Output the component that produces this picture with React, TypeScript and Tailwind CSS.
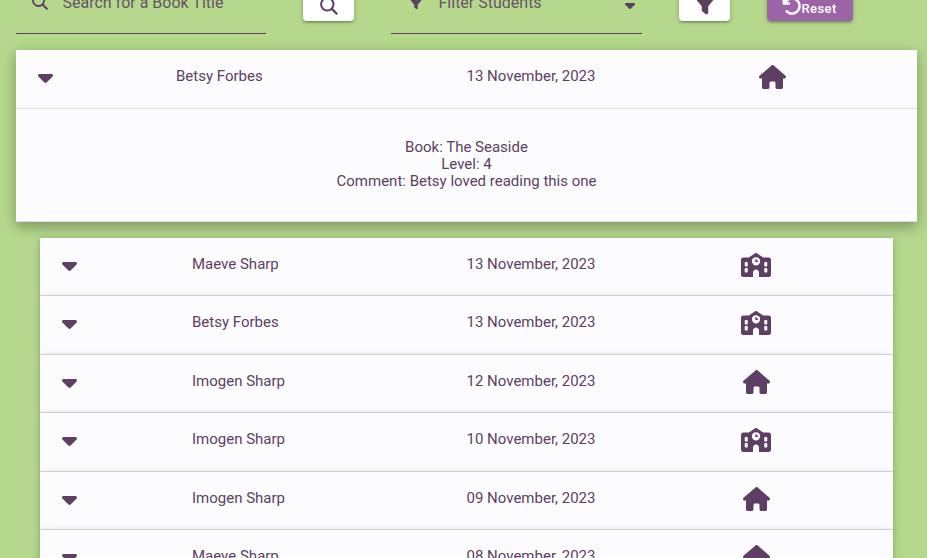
import { FaArrowRotateLeft, FaCaretDown, FaFilter, FaHouse, FaSchool } from "react-icons/fa6";

type Entry = { name: string; date: string; place: "home" | "school" };

const openEntry: Entry = { name: "Betsy Forbes", date: "13 November, 2023", place: "home" };

const entries: Entry[] = [
  { name: "Maeve Sharp", date: "13 November, 2023", place: "school" },
  { name: "Betsy Forbes", date: "13 November, 2023", place: "school" },
  { name: "Imogen Sharp", date: "12 November, 2023", place: "home" },
  { name: "Imogen Sharp", date: "10 November, 2023", place: "school" },
  { name: "Imogen Sharp", date: "09 November, 2023", place: "home" },
  { name: "Maeve Sharp", date: "08 November, 2023", place: "home" },
];

function SearchIcon({ className }: { className: string }) {
  return (
    <svg viewBox="0 0 18 18" className={className} fill="none" stroke="currentColor" strokeWidth="2">
      <circle cx="7.3" cy="7.3" r="6.2" />
      <path d="M11.6 11.6 17.3 17.3" strokeWidth="2.2" />
    </svg>
  );
}

function Header({ entry, open }: { entry: Entry; open?: boolean }) {
  return (
    <div className={`flex border-b border-[#ddd] pt-[15px] pl-[22px] ${open ? "h-[59px]" : "h-[58.4px]"}`}>
      <FaCaretDown className="h-6 w-[15px] shrink-0" />
      <span className={`shrink-0 pt-[2px] leading-[18px] ${open ? "ml-[123px] w-[290.5px]" : "ml-[115px] w-[274.5px]"}`}>
        {entry.name}
      </span>
      <span className="w-[130px] shrink-0 pt-[2px] leading-[18px]">{entry.date}</span>
      <span className={`flex w-[30px] shrink-0 ${open ? "ml-[160.5px]" : "ml-[144.5px]"}`}>
        {entry.place === "home" ? <FaHouse className="ml-[1.5px] h-6 w-[27px]" /> : <FaSchool className="h-6 w-[30px]" />}
      </span>
    </div>
  );
}

export default function App() {
  return (
    <div className="h-[558px] w-[927px] overflow-hidden bg-[#b5d88c] font-[Roboto,sans-serif] text-[15px] text-[#5d3f64]">
      <div className="flex h-[50px] items-start px-4">
        <div className="flex h-[34px] w-[250px] border-b border-[#5d3f64]">
          <SearchIcon className="-mt-[6px] ml-[15.5px] size-4 shrink-0" />
          <span className="-mt-[7px] ml-[15px] text-[16px] leading-5 text-[#5d3f64]/90">Search for a Book Title</span>
        </div>
        <div className="-mt-[15px] ml-[37px] flex h-9 w-[51px] justify-center rounded-[4px] bg-white shadow-[0_2px_2px_0_rgba(0,0,0,0.14),0_3px_1px_-2px_rgba(0,0,0,0.12),0_1px_5px_0_rgba(0,0,0,0.2)]">
          <SearchIcon className="mt-[12px] size-[18px]" />
        </div>
        <div className="ml-[37px] flex h-[34px] w-[251px] border-b border-[#5d3f64]">
          <FaFilter className="-mt-[4px] ml-[17.5px] size-[14px] shrink-0" />
          <span className="-mt-[7px] ml-4 text-[16px] leading-5 text-[#5d3f64]/90">Filter Students</span>
          <FaCaretDown className="-mt-[3px] mr-[7px] ml-auto h-4 w-[10px]" />
        </div>
        <div className="-mt-[15px] ml-[37px] flex h-9 w-[51px] justify-center rounded-[4px] bg-white shadow-[0_2px_2px_0_rgba(0,0,0,0.14),0_3px_1px_-2px_rgba(0,0,0,0.12),0_1px_5px_0_rgba(0,0,0,0.2)]">
          <FaFilter className="mt-[5px] size-[26px]" />
        </div>
        <div className="-mt-[15px] ml-[37px] flex h-9 w-[86px] rounded-[4px] bg-[#9c64a6] pl-[15px] text-[13px] font-medium text-white shadow-[0_2px_2px_0_rgba(0,0,0,0.14),0_3px_1px_-2px_rgba(0,0,0,0.12),0_1px_5px_0_rgba(0,0,0,0.2)]">
          <FaArrowRotateLeft className="mt-[10.5px] size-5 shrink-0" />
          <span className="-ml-[0.5px] pt-[14px] leading-5 tracking-[0.4px]">Reset</span>
        </div>
      </div>
      <div className="mr-[10px] ml-4 h-[172px] bg-[#fcfcfe] shadow-[0_5px_11px_0_rgba(0,0,0,0.18),0_4px_15px_0_rgba(0,0,0,0.15)]">
        <Header entry={openEntry} open />
        <div className="h-[113px] border-b border-[#ddd] pt-[30px] text-center leading-[17px]">
          <p>Book: The Seaside</p>
          <p>Level: 4</p>
          <p>Comment: Betsy loved reading this one</p>
        </div>
      </div>
      <div className="mt-4 mr-[34px] ml-10">
        {entries.map((entry, i) => (
          <div key={i} className="bg-[#fcfcfe] shadow-[0_2px_5px_0_rgba(0,0,0,0.16),0_2px_10px_0_rgba(0,0,0,0.12)]">
            <Header entry={entry} />
          </div>
        ))}
      </div>
    </div>
  );
}
